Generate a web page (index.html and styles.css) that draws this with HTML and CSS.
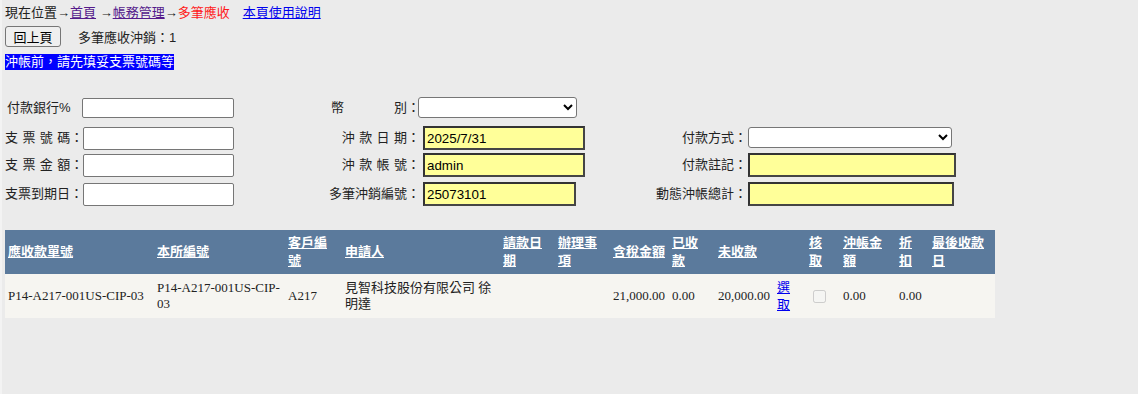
FILE: index.html
```html
<!DOCTYPE html>
<html lang="zh-Hant">
<head>
<meta charset="utf-8">
<title>多筆應收</title>
<link rel="stylesheet" href="styles.css">
</head>
<body>
<div class="page">
  <div class="crumb">現在位置→<a class="visited" href="#">首頁</a> →<a class="visited" href="#">帳務管理</a>→<span class="cur">多筆應收</span><a class="help" href="#">本頁使用說明</a></div>
  <div class="toolbar"><button class="btn" type="button">回上頁</button><span class="count">多筆應收沖銷：1</span></div>
  <div class="notice"><span class="notice-text">沖帳前，請先填妥支票號碼等</span></div>

  <form class="form">
    <label class="lbl r1 first">付款銀行%</label>
    <div class="cell"><input class="txt t1" type="text"></div>
    <label class="lbl r1 right">幣<span class="wgap"></span>別：</label>
    <div class="cell"><select class="sel s-cur"><option></option></select></div>
    <div></div>
    <div></div>

    <label class="lbl">支 票 號 碼：</label>
    <div class="cell"><input class="txt" type="text"></div>
    <label class="lbl right">沖 款 日 期：</label>
    <div class="cell"><input class="yel y-d" type="text" value="2025/7/31"></div>
    <label class="lbl right">付款方式：</label>
    <div class="cell"><select class="sel s-pay"><option></option></select></div>

    <label class="lbl">支 票 金 額：</label>
    <div class="cell"><input class="txt" type="text"></div>
    <label class="lbl right">沖 款 帳 號：</label>
    <div class="cell"><input class="yel y-d" type="text" value="admin"></div>
    <label class="lbl right">付款註記：</label>
    <div class="cell"><input class="yel y-f1" type="text"></div>

    <label class="lbl">支票到期日：</label>
    <div class="cell"><input class="txt" type="text"></div>
    <label class="lbl right">多筆沖銷編號：</label>
    <div class="cell"><input class="yel y-d2" type="text" value="25073101"></div>
    <label class="lbl right">動態沖帳總計：</label>
    <div class="cell"><input class="yel y-f2" type="text"></div>
  </form>

  <table class="grid">
    <colgroup>
      <col class="w149"><col class="w131"><col class="w57"><col class="w158"><col class="w55"><col class="w55"><col class="w59"><col class="w46"><col class="w59"><col class="w32"><col class="w34"><col class="w56"><col class="w33"><col class="w66">
    </colgroup>
    <thead>
      <tr class="head">
        <th><a href="#">應收款單號</a></th>
        <th><a href="#">本所編號</a></th>
        <th><a href="#">客戶編<br>號</a></th>
        <th><a href="#">申請人</a></th>
        <th><a href="#">請款日<br>期</a></th>
        <th><a href="#">辦理事<br>項</a></th>
        <th><a href="#">含稅金額</a></th>
        <th><a href="#">已收<br>款</a></th>
        <th><a href="#">未收款</a></th>
        <th></th>
        <th><a href="#">核<br>取</a></th>
        <th><a href="#">沖帳金<br>額</a></th>
        <th><a href="#">折<br>扣</a></th>
        <th><a href="#">最後收款<br>日</a></th>
      </tr>
    </thead>
    <tbody>
      <tr class="row">
        <td>P14-A217-001US-CIP-03</td>
        <td>P14-A217-001US-CIP-<br>03</td>
        <td>A217</td>
        <td>見智科技股份有限公司 徐<br>明達</td>
        <td></td>
        <td></td>
        <td>21,000.00</td>
        <td>0.00</td>
        <td>20,000.00</td>
        <td><a class="pick" href="#">選<br>取</a></td>
        <td><input class="chk" type="checkbox" disabled></td>
        <td>0.00</td>
        <td>0.00</td>
        <td></td>
      </tr>
    </tbody>
  </table>
</div>
</body>
</html>
```

FILE: styles.css
```css
html, body {
  margin: 0;
  background: #ebebeb;
}
body {
  border-left: 2px solid #f3f3f3;
  min-height: 394px;
  box-sizing: border-box;
  font: 13px "Liberation Sans", "Noto Sans CJK TC", sans-serif;
  color: #222;
}
.page {
  padding: 4px 3px 0 3px;
}
.crumb {
  line-height: 17px;
  height: 17px;
  white-space: nowrap;
}
.crumb a.visited {
  color: #551a8b;
}
.crumb .cur {
  color: #ff1a1a;
}
.crumb .help {
  color: #0000ee;
  margin-left: 13px;
}
.toolbar {
  margin-top: 5px;
  display: flex;
  align-items: center;
  height: 21px;
}
.btn {
  height: 21px;
  padding: 0 7px;
  border: 1px solid #767676;
  border-radius: 3px;
  background: #efefef;
  font: 13px "Liberation Sans", "Noto Sans CJK TC", sans-serif;
  color: #000;
  width: 56px;
}
.count {
  margin-left: 17px;
}
.notice {
  margin-top: 7px;
  height: 16px;
}
.notice-text {
  display: inline-block;
  background: #0000ff;
  color: #fff;
  line-height: 16px;
  height: 16px;
}
.form {
  margin: 27px 0 0 0;
  display: grid;
  grid-template-columns: 77px 238px 100px 220px 107px 1fr;
  grid-template-rows: 29px 27px 29px 24px;
  align-items: start;
}
.lbl {
  height: 24px;
  line-height: 24px;
  white-space: nowrap;
  word-spacing: 0.8px;
}
.lbl.r1 {
  height: 21px;
  line-height: 21px;
}
.lbl.first {
  padding-left: 2px;
}
.lbl.right {
  text-align: right;
}
.wgap {
  display: inline-block;
  width: 50px;
}
.cell {
  display: flex;
  align-items: center;
  height: 24px;
}
.txt {
  box-sizing: border-box;
  width: 151px;
  height: 23px;
  margin: 0 0 0 1px;
  border: 1px solid #767676;
  border-radius: 2px;
  background: #fff;
  padding: 1px 2px;
  font: 13.333px "Liberation Sans", sans-serif;
}
.txt.t1 {
  width: 152px;
  height: 20px;
  margin: 0;
  align-self: flex-start;
  margin-top: 1px;
}
.sel {
  box-sizing: border-box;
  height: 21px;
  border: 1px solid #767676;
  border-radius: 3px;
  background: #fff;
  font: 13.333px "Liberation Sans", sans-serif;
  margin: 0;
  align-self: flex-start;
}
.s-cur {
  width: 159px;
  margin-left: -2px;
}
.s-pay {
  width: 204px;
  margin-left: 1px;
  margin-top: 1px;
}
.yel {
  box-sizing: border-box;
  height: 24px;
  border: 2px solid #454545;
  border-top-color: #333;
  border-left-color: #333;
  background: #ffff99;
  padding: 1px 2px;
  font: 13.333px "Liberation Sans", sans-serif;
  color: #000;
  margin: 0;
}
.y-d {
  width: 162px;
  margin-left: 3px;
}
.y-d2 {
  width: 153px;
  margin-left: 3px;
}
.y-f1 {
  width: 208px;
  margin-left: 1px;
}
.y-f2 {
  width: 206px;
  margin-left: 1px;
}
.grid {
  margin-top: 24px;
  border-collapse: collapse;
  table-layout: fixed;
  width: 990px;
  background: #f6f5f1;
  font: 13px "Liberation Serif", "Noto Sans CJK TC", serif;
  color: #222;
}
.w149 { width: 149px; }
.w131 { width: 131px; }
.w57 { width: 57px; }
.w158 { width: 158px; }
.w55 { width: 55px; }
.w59 { width: 59px; }
.w46 { width: 46px; }
.w32 { width: 32px; }
.w34 { width: 34px; }
.w56 { width: 56px; }
.w33 { width: 33px; }
.w66 { width: 66px; }
.head {
  height: 44px;
}
.grid th {
  background: #5b7a9c;
  color: #fff;
  text-align: left;
  vertical-align: middle;
  padding: 4px 3px;
  line-height: 18px;
  font: bold 13px/18px "Liberation Sans", "Noto Sans CJK TC", sans-serif;
}
.grid th a {
  color: #fff;
  text-decoration: underline;
}
.row {
  height: 44px;
}
.grid td {
  padding: 3px 3px;
  line-height: 16px;
  vertical-align: middle;
  white-space: nowrap;
}
.pick {
  color: #0000ee;
  font-family: "Noto Sans CJK TC", sans-serif;
}
.chk {
  margin: 3px 3px 3px 4px;
  width: 13px;
  height: 13px;
  vertical-align: middle;
}
```
